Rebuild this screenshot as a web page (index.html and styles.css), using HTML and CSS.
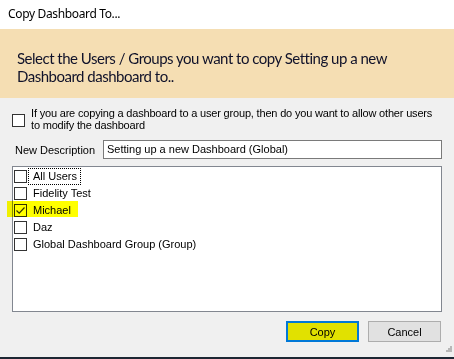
FILE: index.html
```html
<!DOCTYPE html>
<html lang="en">
<head>
  <meta charset="UTF-8">
  <title>Copy Dashboard To...</title>
  <link rel="stylesheet" href="styles.css">
</head>
<body>

  <!-- Window title -->
  <div class="titlebar">Copy Dashboard To...</div>

  <!-- Instructions -->
  <div class="banner">
    Select the Users / Groups you want to copy Setting up a new<br>
    Dashboard dashboard to..
  </div>

  <!-- Allow modify option -->
  <div class="option">
    <span class="check"></span>
    <div class="option-text">If you are copying a dashboard to a user group, then do you want to allow other users<br>to modify the dashboard</div>
  </div>

  <div class="desc-row">
    <label>New Description</label>
    <div class="textbox">Setting up a new Dashboard (Global)</div>
  </div>

  <!-- Users / groups -->
  <div class="list">
    <div class="item"><span class="check"></span><span class="name focus">All Users</span></div>
    <div class="item"><span class="check"></span><span class="name">Fidelity Test</span></div>
    <div class="item">
      <span class="check checked">
        <svg width="11" height="11" viewBox="0 0 11 11"><path d="M1.5 5.5 L4.2 8.2 L9.5 2.5" fill="none" stroke="#333" stroke-width="1.2"/></svg>
      </span>
      <span class="name">Michael</span>
      <span class="marker"></span>
    </div>
    <div class="item"><span class="check"></span><span class="name">Daz</span></div>
    <div class="item"><span class="check"></span><span class="name">Global Dashboard Group (Group)</span></div>
  </div>

  <div class="buttons">
    <button class="btn primary">Copy</button>
    <button class="btn">Cancel</button>
    <svg class="grip" width="6" height="6" viewBox="0 0 6 6">
      <rect x="4" y="0" width="2" height="2" fill="#b8b8b8"/>
      <rect x="2" y="2" width="2" height="2" fill="#b8b8b8"/>
      <rect x="4" y="2" width="2" height="2" fill="#b8b8b8"/>
      <rect x="0" y="4" width="2" height="2" fill="#b8b8b8"/>
      <rect x="2" y="4" width="2" height="2" fill="#b8b8b8"/>
      <rect x="4" y="4" width="2" height="2" fill="#b8b8b8"/>
    </svg>
  </div>

  <div class="taskbar"></div>

</body>
</html>
```

FILE: styles.css
```css
    body {
      font-family: "Liberation Sans", Arial, sans-serif;
      font-size: 11px;
      margin: 0;
      padding: 0;
      width: 454px;
      height: 359px;
      display: flex;
      flex-direction: column;
      background-color: #f0f0f0;
      color: #000;
      overflow: hidden;
    }
    .titlebar {
      height: 29px;
      line-height: 27px;
      padding-left: 8px;
      background-color: #fff;
      font-family: "Noto Sans", sans-serif;
      font-size: 12px;
      letter-spacing: -0.35px;
    }
    .banner {
      height: 69px;
      box-sizing: border-box;
      padding: 20px 17px 0;
      background-color: #f5deb3;
      font-family: Lato, sans-serif;
      font-size: 15px;
      letter-spacing: -0.5px;
      line-height: 18px;
      color: #10122a;
    }
    .check {
      width: 13px;
      height: 13px;
      box-sizing: border-box;
      border: 1px solid #333;
      background-color: #fff;
      display: inline-flex;
      align-items: center;
      justify-content: center;
      flex: none;
    }
    .option {
      display: flex;
      margin-top: 7px;
      padding-left: 12px;
    }
    .option .check {
      margin-top: 9px;
    }
    .option-text {
      margin-left: 6px;
      line-height: 12px;
      padding-top: 2px;
      letter-spacing: -0.18px;
    }
    .desc-row {
      display: flex;
      align-items: center;
      margin-top: 9px;
      padding-left: 15px;
      padding-right: 12px;
    }
    .desc-row label {
      width: 88px;
    }
    .textbox {
      flex: 1;
      height: 19px;
      box-sizing: border-box;
      border: 1px solid #7a7a7a;
      background-color: #fff;
      padding-left: 3px;
      line-height: 17px;
    }
    .list {
      margin: 7px 12px 0;
      height: 146px;
      box-sizing: border-box;
      border: 1px solid #828790;
      background-color: #fff;
      padding: 1px 0 0 1px;
    }
    .item {
      position: relative;
      height: 17px;
      display: flex;
      align-items: center;
    }
    .name {
      margin-left: 1px;
      padding: 1px 3px 1px 4px;
      border: 1px dotted transparent;
      line-height: 13px;
    }
    .name.focus {
      border-color: #000;
    }
    .marker {
      position: absolute;
      left: -7px;
      top: -1px;
      width: 71px;
      height: 16px;
      background-color: #ffff00;
      mix-blend-mode: multiply;
    }
    .buttons {
      position: relative;
      display: flex;
      justify-content: flex-end;
      gap: 9px;
      margin-top: 9px;
      padding-right: 13px;
    }
    .btn {
      width: 73px;
      height: 21px;
      box-sizing: border-box;
      border: 1px solid #adadad;
      background-color: #e1e1e1;
      font-family: "Liberation Sans", Arial, sans-serif;
      font-size: 11px;
      color: #000;
      padding: 0;
    }
    .btn.primary {
      border: 2px solid #0078d7;
      background-color: #e1e100;
    }
    .grip {
      position: absolute;
      right: 2px;
      top: 25px;
    }
    .taskbar {
      margin-top: auto;
      height: 2px;
      background-color: #1d2733;
    }
```
